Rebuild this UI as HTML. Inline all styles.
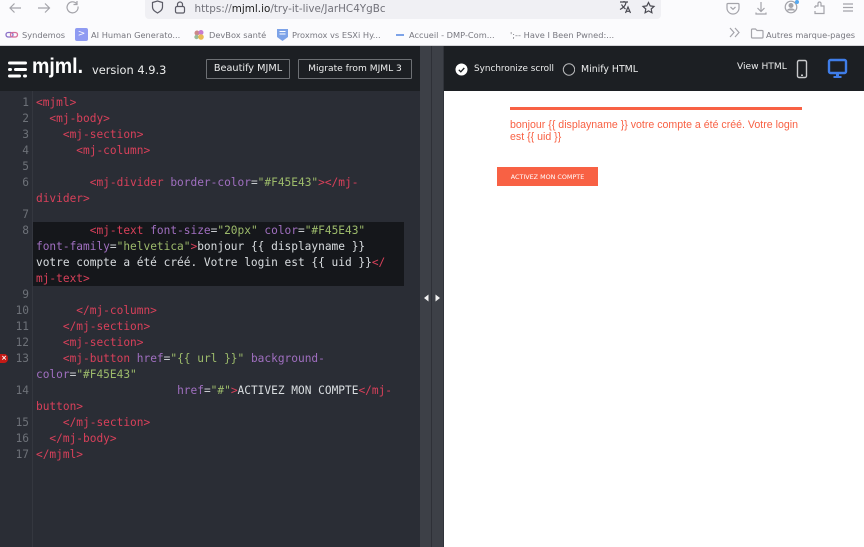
<!DOCTYPE html>
<html lang="fr"><head><meta charset="utf-8"><title>MJML</title>
<style>
html,body{margin:0;padding:0;width:864px;height:547px;overflow:hidden;background:#fff}
body{position:relative;font-family:"Liberation Sans",sans-serif}
.a{position:absolute;white-space:nowrap}
.bm{position:absolute;white-space:nowrap;top:27.500px;line-height:14px;color:#77777f;font-family:"DejaVu Sans",sans-serif;font-size:8.25px}
.ln{position:absolute;left:0;width:29px;margin-top:1px;text-align:right;font:11.17px/16px "DejaVu Sans Mono",monospace;color:#6d7178}
.c{position:absolute;left:36px;margin-top:1px;white-space:pre;font:11.17px/16px "DejaVu Sans Mono",monospace;color:#c8ccd2}
.t{color:#d8405a}.n{color:#a06fc0}.s{color:#9dbb6b}.e{color:#c9ccd0}.w{color:#d9dde0}
.hd{font-family:"DejaVu Sans",sans-serif;color:#eceded;position:absolute;white-space:nowrap}
.btn{position:absolute;top:59px;height:18px;border:1px solid #6d7074;border-radius:1px;box-sizing:content-box;color:#eceded;font:9.7px/18px "DejaVu Sans",sans-serif;text-align:center}
</style></head><body>

<!-- browser chrome -->
<div class="a" style="left:0;top:0;width:864px;height:46px;background:#fbfbfd"></div>
<div class="a" style="left:145px;top:-4px;width:516px;height:23px;background:#f0f0f4;border-radius:4px"></div>
<div class="a" style="left:0;top:45px;width:864px;height:1px;background:#d4d4d8"></div>
<svg class="a" style="left:0;top:0" width="864" height="46" fill="none" stroke="#a4a4aa" stroke-width="1.2">
<path d="M21 8H10M14.500 3.500L10 8l4.500 4.500"/>
<path d="M38 8h11M45 3.500L49.500 8 45 12.500"/>
<path d="M78 6.500a5.500 5.500 0 1 1-1.500-3M77 1v3.500h-3.500"/>
<path d="M152.500 2.500l5-1.500 5 1.500v4.500c0 3-2.500 4.500-5 6-2.500-1.500-5-3-5-6z" stroke="#5b5b66"/>
<rect x="175.500" y="6.500" width="9" height="6.500" rx="1.500" stroke="#5b5b66"/>
<path d="M177.500 6.500v-2a2.500 2.500 0 0 1 5 0v2" stroke="#5b5b66"/>
<path d="M620 2h8M624 1v1.500M626 2.500c-.5 3-3 5.500-6 7M621.500 4.500c1 2 2.500 3.500 4 4.500M625.500 13l2.500-6 2.500 6M626.300 11.300h3.500" stroke="#4a4a52"/>
<path d="M648.500 2.500l1.700 3.400 3.800.5-2.800 2.600.7 3.700-3.400-1.800-3.400 1.800.7-3.700-2.800-2.600 3.800-.5z" stroke="#4a4a52"/>
<path d="M728 3.500h10c.6 0 1 .4 1 1V8a6 6 0 0 1-12 0V4.500c0-.6.400-1 1-1zM730.500 7l2.500 2.300L735.500 7"/>
<path d="M761 2v9M757.500 8l3.500 3.500L764.500 8M756 12.500v1.500h10v-1.500"/>
<circle cx="791" cy="7" r="5.800"/><circle cx="791" cy="5.500" r="1.900" fill="#a4a4aa"/><path d="M787.500 10.500c1-2 6-2 7 0" fill="#a4a4aa"/>
<path d="M815 6h3V3.500a1.500 1.500 0 0 1 3 0V6h3v7.500h-9v-2.500M815 6v2"/>
<path d="M843 4h10M843 7.500h10M843 11h10"/>
<path d="M730 28l4 4.500-4 4.500M735 28l4 4.500-4 4.500"/>
<path d="M751.500 30c0-.6.400-1 1-1h3l1.500 1.500h5c.6 0 1 .4 1 1v5.500c0 .6-.4 1-1 1h-9.500c-.6 0-1-.4-1-1z"/>
</svg>
<div class="a" style="left:795px;top:0;width:4px;height:4px;border-radius:50%;background:#54a8f0"></div>
<div class="a" style="left:194.500px;top:2px;font:10.4px/14px 'DejaVu Sans',sans-serif;color:#72727a">https://<span style="color:#222">mjml.io</span>/try-it-live/JarHC4YgBc</div>

<svg class="a" style="left:5px;top:30px" width="14" height="10" fill="none" stroke="#8a6fc8" stroke-width="1.300"><rect x="1" y="2.500" width="7" height="4.500" rx="2.200"/><rect x="5.500" y="2.500" width="7" height="4.500" rx="2.200" stroke="#d8709a"/></svg>
<div class="bm" style="left:22px">Syndemos</div>
<div class="a" style="left:75px;top:28px;width:13px;height:13px;background:#8f9bf2;border-radius:2px;color:#fff;font:9px/13px 'DejaVu Sans',sans-serif;text-align:center">&gt;</div>
<div class="bm" style="left:91px">AI Human Generato...</div>
<svg class="a" style="left:193px;top:29px" width="12" height="12"><circle cx="4" cy="4" r="2.500" fill="#c88"/><circle cx="8" cy="3.500" r="2.500" fill="#c77bd0"/><circle cx="3.500" cy="8" r="2.200" fill="#9b9"/><circle cx="8" cy="8" r="2.800" fill="#e9bb55"/></svg>
<div class="bm" style="left:209px">DevBox santé</div>
<svg class="a" style="left:277px;top:28px" width="11" height="13"><path d="M0 1h11v8l-5.500 4L0 9z" fill="#7da3e8"/><path d="M2.500 3.500h6M2.500 6h6" stroke="#fff"/></svg>
<div class="bm" style="left:292px">Proxmox vs ESXi Hy...</div>
<div class="a" style="left:396px;top:34px;width:8px;height:1.500px;background:#7da3e8"></div>
<div class="bm" style="left:409px">Accueil - DMP-Com...</div>
<div class="bm" style="left:510px">';-- Have I Been Pwned:...</div>
<div class="bm" style="left:766px">Autres marque-pages</div>

<!-- app header -->
<div class="a" style="left:0;top:46px;width:420px;height:45px;background:#1c1f23"></div>
<div class="a" style="left:444px;top:46px;width:420px;height:45px;background:#1c1f23"></div>

<!-- editor -->
<div class="a" style="left:0;top:91px;width:420px;height:456px;background:#2a2d35"></div>
<div class="a" style="left:32px;top:91px;width:1px;height:456px;background:#34373f"></div>
<div class="a" style="left:420px;top:46px;width:24px;height:501px;background:#3d4047"></div>
<div class="a" style="left:431px;top:46px;width:1px;height:501px;background:#2e3037"></div>
<div class="a" style="left:443px;top:46px;width:1px;height:501px;background:#30333a"></div>
<div class="a" style="left:33px;top:222px;width:371px;height:64px;background:#15171b"></div>

<!-- logo -->
<svg class="a" style="left:8px;top:60px" width="20" height="19" fill="#fff">
<rect x="0" y="1.500" width="19" height="3" rx="1.500"/>
<rect x="0" y="8" width="4" height="3" rx="1.500"/><rect x="6" y="8" width="13" height="3" rx="1.500"/>
<rect x="0" y="14.500" width="13" height="3" rx="1.500"/><rect x="15" y="14.500" width="4" height="3" rx="1.500"/>
</svg>
<div class="a" style="left:32px;top:53px;font:bold 21px/28px 'Liberation Sans',sans-serif;color:#fff;transform:scaleX(.93);transform-origin:left">mjml.</div>
<div class="hd" style="left:92px;top:62px;font-size:11.4px;line-height:16px">version 4.9.3</div>
<div class="btn" style="left:206px;width:82px">Beautify MJML</div>
<div class="btn" style="left:298px;width:112px;font-size:9.1px">Migrate from MJML 3</div>

<svg class="a" style="left:455px;top:63px" width="120" height="14">
<circle cx="6.500" cy="6.500" r="6" fill="#fff"/><path d="M3.800 6.800l2 2 3.500-3.800" fill="none" stroke="#1c1f23" stroke-width="1.300"/>
<circle cx="114" cy="6.500" r="5.700" fill="none" stroke="#b8b9bb"/>
</svg>
<div class="hd" style="left:474px;top:62px;font-size:8.85px;line-height:15px">Synchronize scroll</div>
<div class="hd" style="left:581px;top:62px;font-size:9.4px;line-height:15px">Minify HTML</div>
<div class="hd" style="left:737px;top:60px;font-size:9.1px;line-height:15px">View HTML</div>
<svg class="a" style="left:796px;top:59px" width="12" height="20"><rect x="1.500" y="1.500" width="9" height="17" rx="1.500" fill="#1c1f23" stroke="#c8c9cb" stroke-width="1.400"/><rect x="5" y="15.500" width="2" height="1.500" fill="#c8c9cb"/></svg>
<svg class="a" style="left:827px;top:58px" width="22" height="22"><rect x="2" y="2" width="17" height="13" rx="1.500" fill="#1c1f23" stroke="#3f7de8" stroke-width="2.400"/><path d="M9 16h3v2h2.500v2h-8v-2H9z" fill="#3f7de8"/></svg>

<!-- line numbers -->
<div class="ln" style="top:94px">1</div>
<div class="ln" style="top:110px">2</div>
<div class="ln" style="top:126px">3</div>
<div class="ln" style="top:142px">4</div>
<div class="ln" style="top:158px">5</div>
<div class="ln" style="top:174px">6</div>
<div class="ln" style="top:206px">7</div>
<div class="ln" style="top:222px">8</div>
<div class="ln" style="top:286px">9</div>
<div class="ln" style="top:302px">10</div>
<div class="ln" style="top:318px">11</div>
<div class="ln" style="top:334px">12</div>
<div class="ln" style="top:350px">13</div>
<div class="ln" style="top:382px">14</div>
<div class="ln" style="top:414px">15</div>
<div class="ln" style="top:430px">16</div>
<div class="ln" style="top:446px">17</div>
<div class="a" style="left:0;top:354px;width:8px;height:9px;background:#c41a16;border-radius:0 4px 4px 0;color:#fff;font:bold 7px/9px 'DejaVu Sans',sans-serif;text-align:center">×</div>

<!-- code -->
<div class="c t" style="top:94px">&lt;mjml&gt;</div>
<div class="c t" style="top:110px">  &lt;mj-body&gt;</div>
<div class="c t" style="top:126px">    &lt;mj-section&gt;</div>
<div class="c t" style="top:142px">      &lt;mj-column&gt;</div>
<div class="c" style="top:174px"><span class="t">        &lt;mj-divider</span> <span class="n">border-color</span><span class="e">=</span><span class="s">"#F45E43"</span><span class="t">&gt;&lt;/mj-</span></div>
<div class="c t" style="top:190px">divider&gt;</div>
<div class="c" style="top:222px"><span class="t">        &lt;mj-text</span> <span class="n">font-size</span><span class="e">=</span><span class="s">"20px"</span> <span class="n">color</span><span class="e">=</span><span class="s">"#F45E43"</span></div>
<div class="c" style="top:238px"><span class="n">font-family</span><span class="e">=</span><span class="s">"helvetica"</span><span class="t">&gt;</span><span class="w">bonjour {{ displayname }}</span></div>
<div class="c" style="top:254px"><span class="w">votre compte a été créé. Votre login est {{ uid }}</span><span class="t">&lt;/</span></div>
<div class="c t" style="top:270px">mj-text&gt;</div>
<div class="c t" style="top:302px">      &lt;/mj-column&gt;</div>
<div class="c t" style="top:318px">    &lt;/mj-section&gt;</div>
<div class="c t" style="top:334px">    &lt;mj-section&gt;</div>
<div class="c" style="top:350px"><span class="t">    &lt;mj-button</span> <span class="n">href</span><span class="e">=</span><span class="s">"{{ url }}"</span> <span class="n">background-</span></div>
<div class="c" style="top:366px"><span class="n">color</span><span class="e">=</span><span class="s">"#F45E43"</span></div>
<div class="c" style="top:382px">                     <span class="n">href</span><span class="e">=</span><span class="s">"#"</span><span class="t">&gt;</span><span class="w">ACTIVEZ MON COMPTE</span><span class="t">&lt;/mj-</span></div>
<div class="c t" style="top:398px">button&gt;</div>
<div class="c t" style="top:414px">    &lt;/mj-section&gt;</div>
<div class="c t" style="top:430px">  &lt;/mj-body&gt;</div>
<div class="c t" style="top:446px">&lt;/mjml&gt;</div>

<!-- splitter arrows -->
<svg class="a" style="left:420px;top:292px" width="24" height="12" fill="#f2f2f2"><path d="M8.500 2.500v7L4 6zM15.500 2.500v7L20 6z"/></svg>

<!-- preview -->
<div class="a" style="left:444px;top:91px;width:420px;height:456px;background:#fff"></div>
<div class="a" style="left:510px;top:107px;width:292px;height:2.500px;background:#f86144"></div>
<div class="a" style="left:510px;top:119px;width:292px;font:10.6px/12px 'Liberation Sans',sans-serif;color:#f86144;white-space:normal">bonjour {{ displayname }} votre compte a été créé. Votre login<br>est {{ uid }}</div>
<div class="a" style="left:497px;top:167px;width:101px;height:19px;background:#f86144;color:#fff;font:6.4px/21px 'DejaVu Sans',sans-serif;text-align:center">ACTIVEZ MON COMPTE</div>
</body></html>
